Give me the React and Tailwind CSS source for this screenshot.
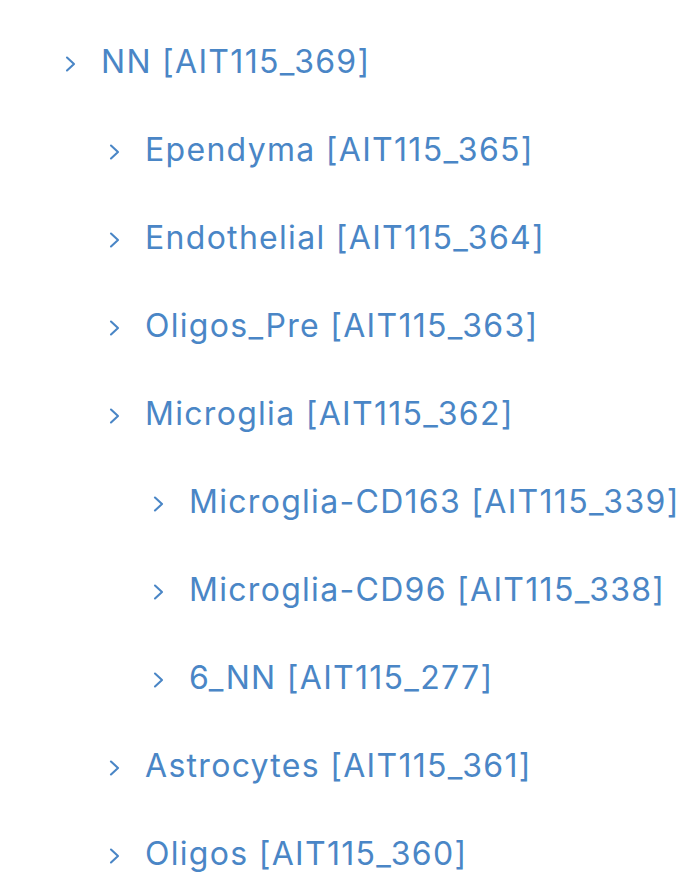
import React from "react";

const rows = [
  { label: "NN [AIT115_369]", level: 0 },
  { label: "Ependyma [AIT115_365]", level: 1 },
  { label: "Endothelial [AIT115_364]", level: 1 },
  { label: "Oligos_Pre [AIT115_363]", level: 1 },
  { label: "Microglia [AIT115_362]", level: 1 },
  { label: "Microglia-CD163 [AIT115_339]", level: 2 },
  { label: "Microglia-CD96 [AIT115_338]", level: 2 },
  { label: "6_NN [AIT115_277]", level: 2 },
  { label: "Astrocytes [AIT115_361]", level: 1 },
  { label: "Oligos [AIT115_360]", level: 1 },
];

const indent = ["pl-[64px]", "pl-[108px]", "pl-[152px]"];

function Chevron() {
  return (
    <svg width="13" height="18" viewBox="0 0 13 18" className="shrink-0 mt-[4px]">
      <path d="M3 2.5 L10 9 L3 15.5" fill="none" stroke="#4a86c6" strokeWidth="2.1" strokeLinecap="round" strokeLinejoin="round" />
    </svg>
  );
}

export default function App() {
  return (
    <div className="w-[690px] h-[894px] bg-white overflow-hidden pt-[18px]" style={{ fontFamily: "Inter, 'Noto Sans', sans-serif" }}>
      {rows.map((r, i) => (
        <div key={i} className={`h-[88px] flex items-center ${indent[r.level]}`}>
          <Chevron />
          <span className="ml-[24px] text-[32px] leading-none tracking-[1.3px] text-[#4a86c6] whitespace-nowrap">{r.label}</span>
        </div>
      ))}
    </div>
  );
}
